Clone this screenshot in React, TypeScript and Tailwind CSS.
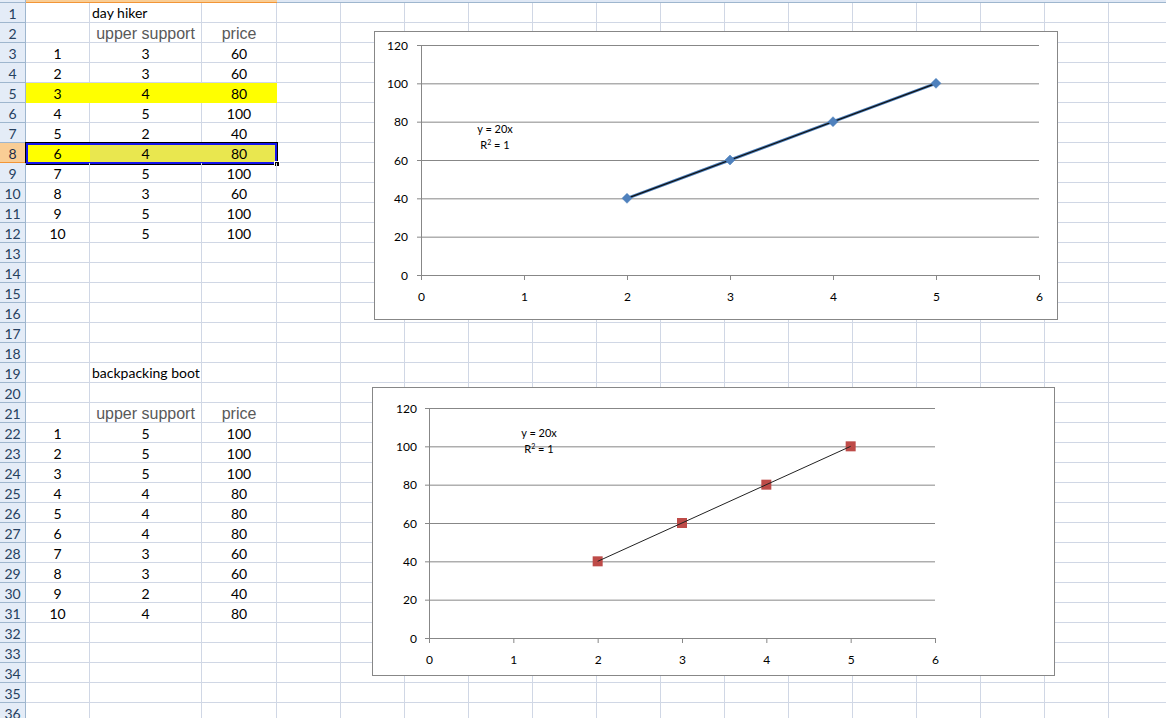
import React from 'react';

type Row = { a?: string; b?: string; c?: string; kind?: 'title' | 'head' | 'data' };

const hiker: [number, number, number][] = [
  [1, 3, 60], [2, 3, 60], [3, 4, 80], [4, 5, 100], [5, 2, 40],
  [6, 4, 80], [7, 5, 100], [8, 3, 60], [9, 5, 100], [10, 5, 100],
];
const boot: [number, number, number][] = [
  [1, 5, 100], [2, 5, 100], [3, 5, 100], [4, 4, 80], [5, 4, 80],
  [6, 4, 80], [7, 3, 60], [8, 3, 60], [9, 2, 40], [10, 4, 80],
];

const rows: Record<number, Row> = {
  1: { b: 'day hiker', kind: 'title' },
  2: { b: 'upper support', c: 'price', kind: 'head' },
  19: { b: 'backpacking boot', kind: 'title' },
  21: { b: 'upper support', c: 'price', kind: 'head' },
};
hiker.forEach((r, i) => (rows[3 + i] = { a: String(r[0]), b: String(r[1]), c: String(r[2]), kind: 'data' }));
boot.forEach((r, i) => (rows[22 + i] = { a: String(r[0]), b: String(r[1]), c: String(r[2]), kind: 'data' }));

const font = { fontFamily: 'Lato, "Open Sans", sans-serif' };
const gridCols = 'grid grid-cols-[26px_64px_112px_75px_repeat(14,64px)]';

function Cell({ text, kind, left, fill }: { text?: string; kind?: string; left?: boolean; fill?: string }) {
  const base = 'h-5 border-r border-b flex items-center overflow-visible whitespace-nowrap';
  const tone =
    fill === 'yellow'
      ? 'bg-[#ffff00] border-[#ffff00]'
      : fill === 'sel'
      ? 'bg-[#e9e74f] border-[#e9e74f]'
      : 'border-[#d0d7e5]';
  if (kind === 'head') {
    return (
      <div className={`${base} ${tone} justify-center pt-[3px] text-[16px] text-[#595959] font-['Liberation_Sans',Arial,sans-serif]`}>
        {text}
      </div>
    );
  }
  return (
    <div className={`${base} ${tone} ${left ? 'justify-start pl-[2px]' : 'justify-center pt-[2px]'} text-[14px] text-black`}>
      {text}
    </div>
  );
}

function SheetRow({ n }: { n: number }) {
  const r = rows[n] || {};
  const fillA = n === 5 || n === 8 ? 'yellow' : undefined;
  const fillBC = n === 5 ? 'yellow' : n === 8 ? 'sel' : undefined;
  const picked = n === 8;
  return (
    <div className={`${gridCols} relative`}>
      <div
        className={`h-5 border-r border-b flex items-center justify-center pt-[1px] text-[14px] ${
          picked ? 'bg-[#f9cd95] border-[#f29536] text-[#1f2f4a]' : 'bg-[#e4ecf7] border-[#9eb6ce] text-[#27415f]'
        }`}
      >
        {n}
      </div>
      <Cell text={r.a} kind={r.kind} fill={fillA} />
      <Cell text={r.b} kind={r.kind} left={r.kind === 'title'} fill={fillBC} />
      <Cell text={r.c} kind={r.kind} fill={fillBC} />
      {Array.from({ length: 14 }).map((_, i) => (
        <Cell key={i} />
      ))}
      {picked && (
        <div className="absolute left-[25px] top-[-1px] w-[253px] h-[23px] border border-black">
          <div className="w-full h-full border-2 border-[#1414ee]" />
          <div className="absolute right-[-3px] bottom-[-3px] w-[6px] h-[6px] bg-black border border-white" />
        </div>
      )}
    </div>
  );
}

type ChartProps = {
  left: number;
  top: number;
  w: number;
  h: number;
  x0: number;
  x6: number;
  y120: number;
  y0: number;
  labelGap: number;
  eq: [number, number];
  kind: 'diamond' | 'square';
};

function Chart({ left, top, w, h, x0, x6, y120, y0, labelGap, eq, kind }: ChartProps) {
  const sx = (v: number) => x0 + ((x6 - x0) * v) / 6;
  const sy = (v: number) => y0 - ((y0 - y120) * v) / 120;
  const pts = [
    [2, 40],
    [3, 60],
    [4, 80],
    [5, 100],
  ];
  const line = pts.map(p => `${sx(p[0])},${sy(p[1])}`).join(' ');
  return (
    <div
      className="absolute bg-white border border-[#878787]"
      style={{ left, top, width: w, height: h }}
    >
      <svg width={w - 2} height={h - 2} className="absolute left-0 top-0" style={font}>
        <g transform="translate(-1,-1)">
          {[20, 40, 60, 80, 100, 120].map(v => (
            <line key={v} x1={x0 - 4} x2={x6} y1={sy(v) + 0.5} y2={sy(v) + 0.5} stroke="#878787" strokeWidth={1} />
          ))}
          <line x1={x0 + 0.5} x2={x0 + 0.5} y1={y120} y2={y0} stroke="#878787" />
          <line x1={x0 - 4} x2={x6} y1={y0 + 0.5} y2={y0 + 0.5} stroke="#878787" />
          {[0, 1, 2, 3, 4, 5, 6].map(v => (
            <line key={v} x1={sx(v) + 0.5} x2={sx(v) + 0.5} y1={y0} y2={y0 + 5} stroke="#878787" />
          ))}
          {[0, 20, 40, 60, 80, 100, 120].map(v => (
            <text key={v} x={x0 - labelGap} y={sy(v) + 4.5} textAnchor="end" fontSize={12} fill="#000">
              {v}
            </text>
          ))}
          {[0, 1, 2, 3, 4, 5, 6].map(v => (
            <text key={v} x={sx(v) + 0.5} y={y0 + 26} textAnchor="middle" fontSize={12} fill="#000">
              {v}
            </text>
          ))}
          {kind === 'diamond' ? (
            <>
              <polyline points={line} fill="none" stroke="#4a7ebb" strokeWidth={3} strokeLinejoin="round" />
              <line x1={sx(2)} y1={sy(40)} x2={sx(5)} y2={sy(100)} stroke="#111" strokeWidth={1.2} />
              {pts.map(p => (
                <path
                  key={p[0]}
                  d={`M${sx(p[0])} ${sy(p[1]) - 5}L${sx(p[0]) + 5} ${sy(p[1])}L${sx(p[0])} ${sy(p[1]) + 5}L${sx(p[0]) - 5} ${sy(p[1])}Z`}
                  fill="#4f81bd"
                  stroke="#4a7ebb"
                  strokeWidth={0.5}
                />
              ))}
            </>
          ) : (
            <>
              {pts.map(p => (
                <rect key={p[0]} x={sx(p[0]) - 5} y={sy(p[1]) - 5} width={10} height={10} fill="#be4b48" />
              ))}
              <line x1={sx(2)} y1={sy(40)} x2={sx(5)} y2={sy(100)} stroke="#222" strokeWidth={1} />
            </>
          )}
          <text x={eq[0]} y={eq[1]} textAnchor="middle" fontSize={11} fill="#000">
            y = 20x
          </text>
          <text x={eq[0]} y={eq[1] + 16} textAnchor="middle" fontSize={11} fill="#000">
            R
            <tspan fontSize={7} dy={-4}>
              2
            </tspan>
            <tspan dy={4}> = 1</tspan>
          </text>
        </g>
      </svg>
    </div>
  );
}

export default function App() {
  return (
    <div className="relative w-[1166px] h-[718px] overflow-hidden bg-white" style={font}>
      <div className={`${gridCols} h-[3px]`}>
        <div className="bg-[#e4ecf7] border-r border-b border-[#9eb6ce]" />
        <div className="col-span-3 bg-[#f9cd95] border-b border-[#f29536]" />
        <div className="col-span-14 bg-[#dfe8f5] border-b border-[#9eb6ce]" />
      </div>
      {Array.from({ length: 36 }).map((_, i) => (
        <SheetRow key={i} n={i + 1} />
      ))}
      <Chart left={374} top={31} w={684} h={289} x0={47} x6={665} y120={14} y0={244} labelGap={13} eq={[121, 102]} kind="diamond" />
      <Chart left={372} top={387} w={683} h={289} x0={57} x6={563} y120={21} y0={251} labelGap={12} eq={[167, 50]} kind="square" />
    </div>
  );
}
